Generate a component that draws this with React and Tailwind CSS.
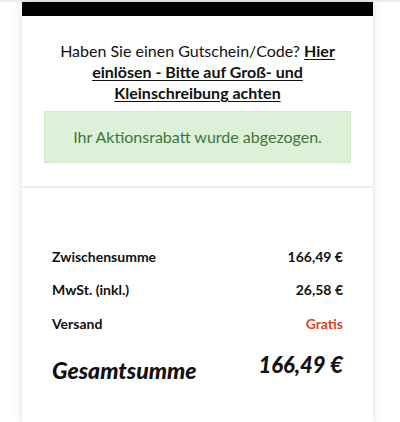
export default function App() {
  return (
    <div className="min-h-[422px] bg-white border-t-2 border-[#eeeeee]" style={{ fontFamily: 'Lato, "Open Sans", sans-serif' }}>
      <div className="ml-[22px] w-[351px] bg-white shadow-[0_0_10px_rgba(0,0,0,0.13)] min-h-[420px]">
        <div className="h-[14px] bg-black" />

        {/* Voucher */}
        <div className="px-[22px] pt-[24px] pb-[23px]">
          <p className="text-center text-[16px] leading-[21px] text-[#111]">
            Haben Sie einen Gutschein/Code?{' '}
            <a href="#" className="font-bold underline underline-offset-2 text-[#111]">
              Hier einlösen - Bitte auf Groß- und Kleinschreibung achten
            </a>
          </p>
          <div className="mt-[8px] h-[52px] flex items-center justify-center bg-[#dff0d8] border border-[#d0e9c6] text-[#3c763d] text-[16px]">
            Ihr Aktionsrabatt wurde abgezogen.
          </div>
        </div>

        <div className="h-[2px] bg-[#eeeeee]" />

        {/* Totals */}
        <div className="px-[30px] pt-[58px] pb-[40px] text-[14px] font-bold text-[#111]">
          <div className="flex justify-between h-[20px] items-center">
            <span>Zwischensumme</span>
            <span>166,49 €</span>
          </div>
          <div className="flex justify-between h-[20px] items-center mt-[13px]">
            <span>MwSt. (inkl.)</span>
            <span>26,58 €</span>
          </div>
          <div className="flex justify-between h-[20px] items-center mt-[14px]">
            <span>Versand</span>
            <span className="text-[#d9471c]">Gratis</span>
          </div>
          <div className="flex justify-between items-start mt-[18px] italic font-black leading-[28px]">
            <span className="text-[23px] mt-[5px]">Gesamtsumme</span>
            <span className="text-[22px]">166,49 €</span>
          </div>
        </div>
      </div>
    </div>
  );
}
